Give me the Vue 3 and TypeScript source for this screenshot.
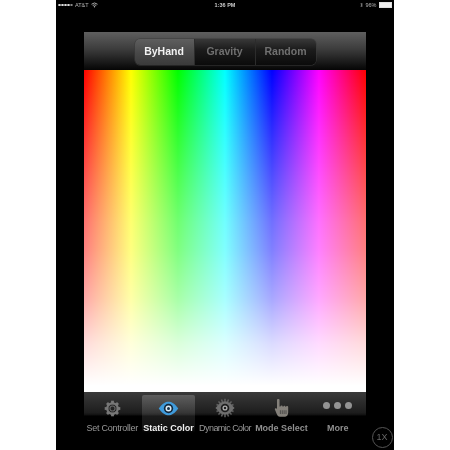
<script setup lang="ts">
interface Tab { label: string; icon: string; active?: boolean; fit?: string }
const segments: string[] = ['ByHand', 'Gravity', 'Random']
const tabs: Tab[] = [
  { label: 'Set Controller', icon: 'gear', fit: 'narrow' },
  { label: 'Static Color', icon: 'eye', active: true },
  { label: 'Dynamic Color', icon: 'dynamic', fit: 'tight' },
  { label: 'Mode Select', icon: 'hand' },
  { label: 'More', icon: 'more' },
]
const gearTeeth: number[] = [0, 45, 90, 135, 180, 225, 270, 315]
const rays: number[] = Array.from({ length: 16 }, (_, i) => i * 22.5)
</script>

<template>
  <div class="page">
    <main class="device">
      <header class="status">
        <div class="status-side">
          <span class="signal"><i v-for="n in 4" :key="n" class="on"></i><i></i></span>
          <span>AT&amp;T</span>
          <svg width="7" height="6" viewBox="0 0 14 12"><path d="M1 4.5a9 9 0 0 1 12 0M3.5 7a5.5 5.5 0 0 1 7 0" fill="none" stroke="#bbb" stroke-width="1.8"/><path d="M7 11.5 5.2 9a2.6 2.6 0 0 1 3.6 0z" fill="#bbb"/></svg>
        </div>
        <div class="status-time">1:36 PM</div>
        <div class="status-side status-right">
          <svg width="3" height="6" viewBox="0 0 6 12"><path d="M1 3l4 5-2 2V2l2 2-4 5" fill="none" stroke="#999" stroke-width="1"/></svg>
          <span>96%</span>
          <span class="battery"><b></b></span>
        </div>
      </header>

      <div class="app">
        <nav class="navbar">
          <div class="segmented">
            <div v-for="(s, i) in segments" :key="s" class="segment" :class="{ selected: i === 0 }">{{ s }}</div>
          </div>
        </nav>

        <div class="picker"><div class="whiten"></div></div>

        <footer class="tabbar">
          <div v-for="t in tabs" :key="t.label" class="tab" :class="{ active: t.active }">
            <div class="icon" :class="{ raised: t.icon === 'more' }">
              <svg v-if="t.icon === 'gear'" width="17" height="17" viewBox="0 0 24 24">
                <rect v-for="a in gearTeeth" :key="a" x="10" y="1" width="4" height="5" fill="#777" :transform="`rotate(${a} 12 12)`" />
                <circle cx="12" cy="12" r="7.4" fill="none" stroke="#777" stroke-width="3.2" />
                <circle cx="12" cy="12" r="3.6" fill="none" stroke="#666" stroke-width="1.6" />
              </svg>
              <svg v-else-if="t.icon === 'eye'" width="21" height="15" viewBox="0 0 28 20">
                <path d="M1 10C6 3 10 1 14 1s8 2 13 9c-5 7-9 9-13 9S6 17 1 10z" fill="#3f9bdc" />
                <circle cx="14" cy="10" r="6.200" fill="#12283c" />
                <circle cx="14" cy="10" r="4" fill="#dcecf6" />
                <circle cx="14" cy="10" r="2" fill="#16334c" />
              </svg>
              <svg v-else-if="t.icon === 'dynamic'" width="22" height="20" viewBox="0 0 28 26">
                <path v-for="a in rays" :key="a" d="M14 1v5" stroke="#606060" stroke-width="2" :transform="`rotate(${a} 14 13)`" />
                <path d="M2 13C7 6 10 4.500 14 4.500S21 6 26 13c-5 7-8 8.500-12 8.500S7 20 2 13z" fill="#6e6e6e" />
                <circle cx="14" cy="13" r="5.600" fill="#1d1d1d" />
                <circle cx="14" cy="13" r="3.300" fill="#b0b0b0" />
                <circle cx="14" cy="13" r="1.600" fill="#222" />
              </svg>
              <svg v-else-if="t.icon === 'hand'" width="15" height="18" viewBox="0 0 20 24">
                <path d="M4 1.500a1.700 1.700 0 0 1 3.400 0V10h1.200a1.500 1.500 0 0 1 3 .2h.8a1.500 1.500 0 0 1 3 .3h.5a1.500 1.500 0 0 1 3 .4V18c0 3-1.500 5.500-4 5.500H8c-2.500 0-3.300-1.500-4.500-4L1.200 14c-.6-1.600 1.400-2.600 2.800-1z" fill="#84807a" />
                <path d="M8.500 15v5M11 15v5M13.500 15v5M16 15v5" stroke="#3c3c3c" stroke-width="1" />
              </svg>
              <div v-else class="dots"><i></i><i></i><i></i></div>
            </div>
            <div class="tab-label" :class="t.fit">{{ t.label }}</div>
          </div>
        </footer>
      </div>

      <button class="zoom-badge" type="button">1X</button>
    </main>
  </div>
</template>

<style>
html, body { margin: 0; background: #fff; }
</style>

<style scoped>
.page {
  width: 450px;
  height: 450px;
  overflow: hidden;
  background: #fff;
  font-family: "Liberation Sans", Arial, sans-serif;
}
.device {
  position: relative;
  width: 338px;
  height: 450px;
  margin-left: 56px;
  background: #000;
  box-sizing: border-box;
  filter: blur(0.6px);
  display: flex;
  flex-direction: column;
}
.status {
  height: 32px;
  flex: none;
  box-sizing: border-box;
  padding: 1px 2px 0 2px;
  display: grid;
  grid-template-columns: 1fr auto 1fr;
  align-items: start;
  color: #b5b5b5;
  font-size: 5.5px;
  line-height: 8px;
}
.status-side { display: flex; align-items: center; gap: 2.500px; height: 8px; }
.status-right { justify-content: flex-end; }
.status-time { color: #ccc; font-weight: bold; }
.signal { display: flex; gap: 0.500px; }
.signal i { width: 2.500px; height: 2.500px; border-radius: 50%; box-sizing: border-box; border: 0.500px solid #888; }
.signal i.on { background: #ddd; border-color: #ddd; }
.battery { width: 11px; height: 4px; background: #1a1a1a; border: 0.500px solid #ddd; display: block; }
.battery b { display: block; width: 96%; height: 100%; background: #eee; }

.app { margin: 0 28px; flex: 1; display: flex; flex-direction: column; min-height: 0; }

.navbar {
  height: 38px;
  flex: none;
  display: flex;
  justify-content: center;
  align-items: flex-start;
  padding-top: 7px;
  box-sizing: border-box;
  background: linear-gradient(#5f5f5f 0, #3c3c3c 45%, #0d0d0d 92%, #050505 100%);
}
.segmented {
  display: flex;
  height: 26px;
  border-radius: 5px;
  overflow: hidden;
  background: linear-gradient(#383838 0, #1c1c1c 40%, #0b0b0b 100%);
  box-shadow: 0 0 0 .5px #3a3a3a;
}
.segment {
  width: 61px;
  text-align: center;
  font-size: 10.500px;
  font-weight: bold;
  line-height: 25px;
  color: #707070;
  border-left: 1px solid #2c2c2c;
  box-sizing: border-box;
}
.segment.selected {
  width: 59px;
  border-left: 0;
  color: #f2f2f2;
  background: linear-gradient(#5e5e5e 0, #484848 55%, #3a3a3a 100%);
}

.picker {
  height: 322px;
  flex: none;
  position: relative;
  background: linear-gradient(90deg, #ff0000 0%, #ffff00 16.67%, #00ff00 33.33%, #00ffff 50%, #0000ff 66.67%, #ff00ff 83.33%, #ff0000 100%);
}
.whiten {
  position: absolute;
  inset: 0;
  background: linear-gradient(rgba(255,255,255,0) 0%, rgba(255,255,255,.44) 47%, rgba(255,255,255,.5) 56%, rgba(255,255,255,.66) 71%, rgba(255,255,255,.86) 85%, #fff 98%);
}

.tabbar {
  flex: 1;
  display: grid;
  grid-template-columns: repeat(5, minmax(0, 1fr));
  align-content: start;
  padding: 3px 0 0 0;
  box-sizing: border-box;
  background: linear-gradient(#3a3a3a 0, #1d1d1d 45%, #101010 50%, #000 52%, #000 100%);
  background-size: 100% 46px;
  background-repeat: no-repeat;
}
.tab {
  min-width: 0;
  height: 38px;
  display: flex;
  flex-direction: column;
  align-items: center;
  border-radius: 2px;
}
.tab.active { background: linear-gradient(rgba(255,255,255,.2), rgba(255,255,255,.11) 50%, rgba(255,255,255,.08) 85%, rgba(255,255,255,0)); margin: 0 2px; }
.icon { flex: none; height: 20px; margin-top: 3px; display: flex; align-items: center; justify-content: center; }
.icon.raised { margin-top: 0; }
.tab-label {
  flex: none;
  margin-top: 5px;
  white-space: nowrap;
  font-size: 9px;
  line-height: 11px;
  font-weight: bold;
  color: #8e8e8e;
}
.icon.raised + .tab-label { margin-top: 8px; }
.tab-label.narrow { letter-spacing: -0.25px; font-weight: normal; color: #999; }
.tab-label.tight { letter-spacing: -0.55px; font-weight: normal; color: #999; }
.tab.active .tab-label { color: #f0f0f0; }
.dots { display: flex; gap: 4px; }
.dots i { width: 7px; height: 7px; border-radius: 50%; background: #939393; }
.zoom-badge {
  position: absolute;
  left: 315.500px;
  top: 427px;
  width: 21px;
  height: 21px;
  box-sizing: border-box;
  padding: 0;
  border: 1px solid #555;
  border-radius: 50%;
  background: #000;
  color: #666;
  font: 9px/19px "Liberation Sans", Arial, sans-serif;
}
</style>
